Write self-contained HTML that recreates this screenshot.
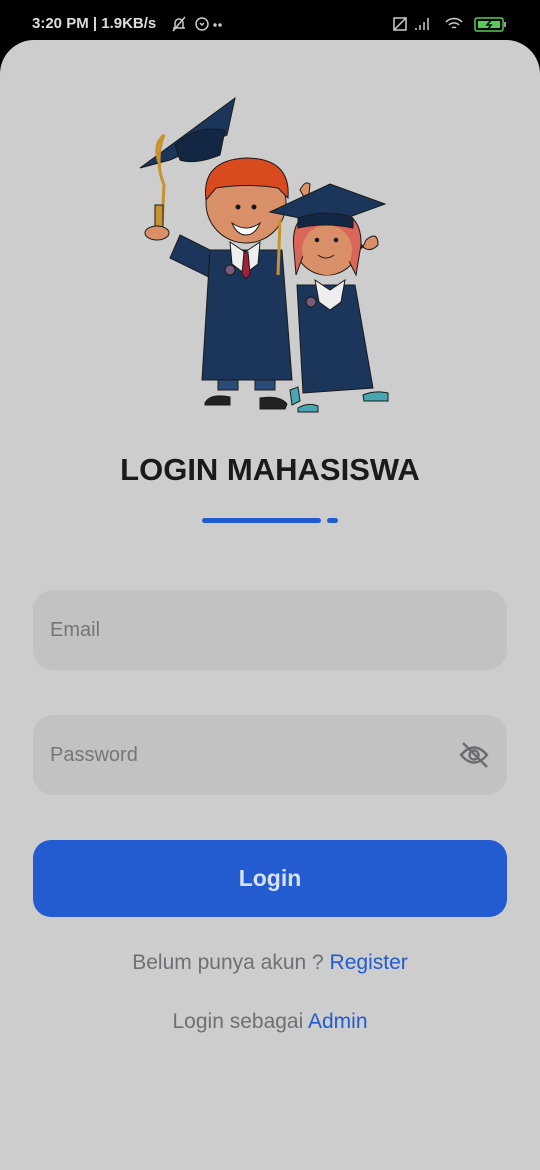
<!DOCTYPE html>
<html><head><meta charset="utf-8"><style>
*{margin:0;padding:0;box-sizing:border-box}
body{width:540px;height:1170px;background:#000;font-family:"Liberation Sans",Roboto,sans-serif;position:relative;overflow:hidden}
.sb{position:absolute;top:0;left:0;width:540px;height:40px;color:#ddd;font-size:15px;font-weight:bold}
.card{position:absolute;top:40px;left:0;width:540px;height:1130px;background:#cdcdcd;border-radius:34px 34px 0 0}
.t{position:absolute;left:0;width:540px;text-align:center}
.f{position:absolute;left:33px;width:474px;height:80px;background:#c2c2c4;border-radius:20px;color:#76767a;font-size:20px;padding-left:17px;line-height:80px}
.btn{position:absolute;left:33px;top:840px;width:474px;height:77px;background:#235bd1;border-radius:18px;color:#d8e0f0;font-size:23px;font-weight:bold;text-align:center;line-height:77px}
</style></head><body>
<div class="sb">
<span style="position:absolute;left:32px;top:15px">3:20 PM | 1.9KB/s</span>
<svg style="position:absolute;left:170px;top:14px" width="60" height="20" viewBox="0 0 60 20" fill="none" stroke="#ccc" stroke-width="1.5"><path d="M3 14h12M5 14V9a4 4 0 0 1 8 0v5M3 17L15 3"/><circle cx="32" cy="10" r="6"/><path d="M30 9l2 2 2-2"/><circle cx="45" cy="11" r="1" fill="#ccc"/><circle cx="50" cy="11" r="1" fill="#ccc"/></svg>
<svg style="position:absolute;left:392px;top:14px" width="120" height="20" viewBox="0 0 120 20" fill="none" stroke="#ccc" stroke-width="1.5"><rect x="2" y="4" width="12" height="12"/><path d="M2 16L14 4"/><path d="M24 16v-2M28 16v-5M32 16v-8M36 16V4" stroke="#999" stroke-width="2"/><path d="M54 8a11 11 0 0 1 16 0M57 11a7 7 0 0 1 10 0M60 14a3 3 0 0 1 4 0"/><rect x="83" y="4" width="28" height="13" rx="2" stroke="#5c5"/><rect x="86" y="7" width="22" height="7" fill="#5c5" stroke="none"/><path d="M99 6l-4 5h4l-3 4" stroke="#000"/><path d="M113 8v5"/></svg>
</div>
<div class="card"></div>
<svg style="position:absolute;left:130px;top:90px" width="280" height="340" viewBox="0 0 280 340">
<g stroke="#1a1a1a" stroke-width="1">
<path d="M10 78L105 8 97 45 40 70z" fill="#1c355a"/>
<path d="M45 55q20-20 50-15l-5 25q-25 10-40 5z" fill="#132744"/>
<path d="M30 75q-8-20 4-30q-10 25 0 50l-2 40" fill="none" stroke="#c8922e" stroke-width="3"/>
<rect x="25" y="115" width="8" height="22" fill="#c8922e"/>
<path d="M50 145l40 20-5 25-45-22z" fill="#1c355a"/>
<ellipse cx="27" cy="143" rx="12" ry="7" fill="#d99068"/>
<path d="M190 165l35-22 8 14-38 28z" fill="#1c355a"/>
<path d="M236 150q12-10 12 5-8 8-15 2z" fill="#d99068"/>
<path d="M170 100q5-10 10-6l-2 20z" fill="#d99068"/>
<path d="M80 160h72l10 130H72z" fill="#1c355a"/>
<path d="M88 290h20v10H88zM125 290h20v10h-20z" fill="#2a4a78"/>
<path d="M75 313q5-10 25-6v8H75zM130 308q20-3 27 6l-2 5h-25z" fill="#222"/>
<path d="M100 152l15 10 15-10-2 22-13 10-13-10z" fill="#eee"/>
<path d="M114 162h4l2 22-4 5-4-5z" fill="#a3203a"/>
<circle cx="116" cy="113" r="40" fill="#d99068"/>
<path d="M76 110q-5-40 40-42q45 0 42 40l-10-10q-30-5-62 0z" fill="#d94a1e"/>
<path d="M102 133q14 10 28 0q-5 12-14 12t-14-12z" fill="#fff"/>
<circle cx="108" cy="117" r="2" fill="#111"/><circle cx="124" cy="117" r="2" fill="#111"/>
<path d="M167 195h58l18 103-70 5z" fill="#1c355a"/>
<path d="M160 300l8-3 2 14-8 4zM168 318q10-6 20-2v6h-20zM233 305q12-5 25-2v8h-24z" fill="#4aa6b0"/>
<circle cx="197" cy="152" r="33" fill="#d99068"/>
<path d="M164 160q-5-40 33-40 35 0 34 35l-5 30-10-20q-20-5-42-2l-8 22z" fill="#d96656"/>
<circle cx="197" cy="160" r="25" fill="#d99068" stroke="none"/>
<circle cx="187" cy="150" r="1.8" fill="#111"/><circle cx="206" cy="150" r="1.8" fill="#111"/>
<path d="M188 165q8 6 16 0" fill="none"/>
<path d="M140 122l60-28 55 20-55 20z" fill="#1c355a"/>
<path d="M168 128q30-10 55 0v10q-28-6-55 0z" fill="#132744"/>
<path d="M150 130l-2 55" stroke="#c8922e" stroke-width="3"/>
<path d="M185 190l15 10 15-10-4 22-11 8-11-8z" fill="#eee"/>
<circle cx="100" cy="180" r="5" fill="#7a5a7a"/><circle cx="181" cy="212" r="5" fill="#7a5a7a"/>
</g></svg>
<div class="t" style="top:452px;font-size:31px;font-weight:bold;color:#1a1a1a">LOGIN MAHASISWA</div>
<div style="position:absolute;left:202px;top:518px;width:119px;height:5px;background:#225bd0;border-radius:3px"></div>
<div style="position:absolute;left:327px;top:518px;width:11px;height:5px;background:#225bd0;border-radius:3px"></div>
<div class="f" style="top:590px">Email</div>
<div class="f" style="top:715px">Password
<svg style="position:absolute;right:18px;top:26px" width="30" height="28" viewBox="0 0 30 28" fill="none" stroke="#6c6c70" stroke-width="2.4"><path d="M2 14q13-15 26 0q-13 15-26 0z"/><circle cx="15" cy="14" r="4.5"/><path d="M4 2l24 24"/></svg></div>
<div class="btn">Login</div>
<div class="t" style="top:951px;font-size:21px;color:#707074">Belum punya akun ? <span style="color:#225bd0">Register</span></div>
<div class="t" style="top:1010px;font-size:21px;color:#707074">Login sebagai <span style="color:#225bd0">Admin</span></div>
</body></html>
